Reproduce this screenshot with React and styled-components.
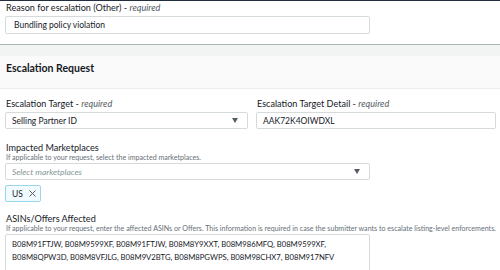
import React from 'react';
import styled, { createGlobalStyle } from 'styled-components';

const GlobalStyle = createGlobalStyle`
    html, body {
        margin: 0;
        padding: 0;
        background: #ffffff;
    }
    body {
        font-family: Lato, "Open Sans", sans-serif;
        color: #16191f;
    }
`;

const Page = styled.div`
    width: 500px;
    height: 270px;
    overflow: hidden;
    border-top: 1px solid #232f3e;
    box-sizing: border-box;
`;

const Section = styled.div`
    padding: 1px 5px 10px 5px;
    border-bottom: 1px solid #aab7b8;
`;

const Spacer = styled.div`
    height: 11px;
    background: #f2f3f3;
`;

const Header = styled.div`
    height: 33px;
    box-sizing: border-box;
    padding: 5px 6px 0 6px;
    background: #fafafa;
    border-bottom: 1px solid #eaeded;
    font-size: 10.5px;
    line-height: 14px;
    font-weight: 700;
`;

const Body = styled.div`
    padding: 9px 5px 0 5px;
    display: flex;
    flex-direction: column;
`;

const Row = styled.div`
    display: grid;
    grid-template-columns: 243px 240px;
    gap: 8px;
`;

const Field = styled.div`
    display: flex;
    flex-direction: column;
    width: ${(p) => p.$width || 'auto'};
    margin-top: ${(p) => p.$top || '0'};
`;

const Label = styled.div`
    font-size: 9.1px;
    line-height: 12px;
    padding-left: 1px;
    margin-bottom: 2px;

    em {
        font-style: italic;
        color: #545b64;
    }
`;

const Description = styled.div`
    font-size: 7.1px;
    line-height: 9px;
    color: #687078;
    padding-left: 1px;
    margin-top: -3px;
    margin-bottom: 1px;
    white-space: nowrap;
`;

const Input = styled.div`
    height: ${(p) => p.$height || '17px'};
    box-sizing: border-box;
    border: 1px solid #d5dbdb;
    border-radius: 2px;
    display: flex;
    align-items: center;
    justify-content: space-between;
    padding: 0 9px 0 ${(p) => p.$pad || '6px'};
    font-size: 8.5px;
    background: #ffffff;
`;

const Placeholder = styled.span`
    font-style: italic;
    color: #879596;
`;

const Caret = styled.svg`
    width: 6px;
    height: 5px;
    fill: #545b64;
`;

const Tag = styled.div`
    align-self: flex-start;
    display: flex;
    align-items: center;
    gap: 6px;
    height: 17px;
    box-sizing: border-box;
    margin-top: 5px;
    padding: 0 4px 0 6px;
    border: 1px solid #99d6ea;
    border-radius: 2px;
    background: #f1faff;
    font-size: 8.5px;
`;

const TextArea = styled.div`
    width: 365px;
    height: 40px;
    box-sizing: border-box;
    border: 1px solid #d5dbdb;
    border-radius: 2px;
    padding: 3px 6px;
    font-size: 7.7px;
    line-height: 12.5px;
`;

const DownCaret = () => (
    <Caret viewBox="0 0 6 5">
        <path d="M0 0h6L3 5z" />
    </Caret>
);

const App = () => {
    return (
        <Page>
            <GlobalStyle />
            <Section>
                <Field $width="365px">
                    <Label>
                        Reason for escalation (Other) - <em>required</em>
                    </Label>
                    <Input $height="18px" $pad="8px">
                        Bundling policy violation
                    </Input>
                </Field>
            </Section>
            <Spacer />
            <Header>Escalation Request</Header>
            <Body>
                <Row>
                    <Field>
                        <Label>
                            Escalation Target - <em>required</em>
                        </Label>
                        <Input>
                            Selling Partner ID
                            <DownCaret />
                        </Input>
                    </Field>
                    <Field>
                        <Label>
                            Escalation Target Detail - <em>required</em>
                        </Label>
                        <Input>AAK72K4OIWDXL</Input>
                    </Field>
                </Row>
                <Field $width="365px" $top="13px">
                    <Label>Impacted Marketplaces</Label>
                    <Description>
                        If applicable to your request, select the impacted
                        marketplaces.
                    </Description>
                    <Input>
                        <Placeholder>Select marketplaces</Placeholder>
                        <DownCaret />
                    </Input>
                    <Tag>
                        US
                        <svg width="7" height="7" viewBox="0 0 7 7">
                            <path
                                d="M0.5 0.5l6 6M6.5 0.5l-6 6"
                                stroke="#545b64"
                                strokeWidth="1"
                            />
                        </svg>
                    </Tag>
                </Field>
                <Field $top="11px">
                    <Label>ASINs/Offers Affected</Label>
                    <Description>
                        If applicable to your request, enter the affected ASINs
                        or Offers. This information is required in case the
                        submitter wants to escalate listing-level enforcements.
                    </Description>
                    <TextArea>
                        B08M91FTJW, B08M9599XF, B08M91FTJW, B08M8Y9XXT,
                        B08M986MFQ, B08M9599XF, B08M8QPW3D, B08M8VFJLG,
                        B08M9V2BTG, B08M8PGWPS, B08M98CHX7, B08M917NFV
                    </TextArea>
                </Field>
            </Body>
        </Page>
    );
};

export default App;
